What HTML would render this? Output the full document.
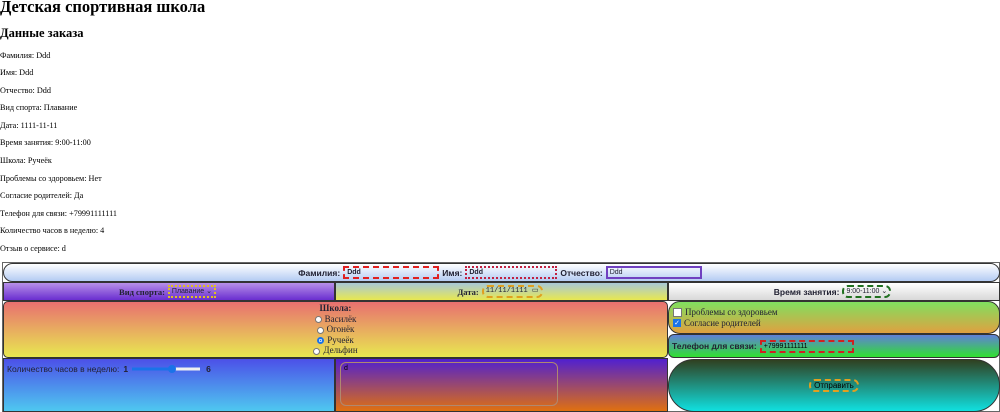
<!DOCTYPE html>
<html><head><meta charset="utf-8"><style>
body{margin:0;width:1000px;height:412px;overflow:hidden;background:#fff;font-family:"Liberation Serif",serif;color:#000;position:relative}
.a{position:absolute}
h1{position:absolute;margin:0;left:0;top:-3px;font-size:16.5px;font-weight:bold;line-height:20px}
h2{position:absolute;margin:0;left:0;top:25px;font-size:12.5px;font-weight:bold;line-height:16px}
.p{position:absolute;left:0;font-size:8.2px;white-space:nowrap}
.c{box-sizing:border-box;border:1px solid #333;font-family:"Liberation Sans",sans-serif;font-size:8.5px;color:#223;display:flex;align-items:center;justify-content:center}
.s{font-family:"Liberation Serif",serif}
.b{font-weight:bold}
.in{display:inline-block;height:9px;font-size:7px;line-height:9px;padding:0 2px;text-align:left;box-sizing:content-box;margin:0 3px}
.r{display:inline-block;width:7px;height:7px;border-radius:50%;background:#fff;border:1px solid #777;vertical-align:middle;margin-right:3px;box-sizing:border-box}
</style></head><body>
<h1>Детская спортивная школа</h1>
<h2>Данные заказа</h2>
<div class="p" style="top:51px">Фамилия: Ddd</div>
<div class="p" style="top:68px">Имя: Ddd</div>
<div class="p" style="top:86px">Отчество: Ddd</div>
<div class="p" style="top:103px">Вид спорта: Плавание</div>
<div class="p" style="top:121px">Дата: 1111-11-11</div>
<div class="p" style="top:138px">Время занятия: 9:00-11:00</div>
<div class="p" style="top:156px">Школа: Ручеёк</div>
<div class="p" style="top:174px">Проблемы со здоровьем: Нет</div>
<div class="p" style="top:191px">Согласие родителей: Да</div>
<div class="p" style="top:209px">Телефон для связи: +79991111111</div>
<div class="p" style="top:226px">Количество часов в неделю: 4</div>
<div class="p" style="top:244px">Отзыв о сервисе: d</div>

<div class="a" style="left:2px;top:262px;width:998px;height:150px;border:1px solid #666;box-sizing:border-box"></div>

<div class="a c b" style="left:3px;top:263px;width:997px;height:19px;border-radius:10px;background:linear-gradient(#fff,#b4cbf3)">
Фамилия:<span class="in" style="width:88px;border:2px dashed #e02020">Ddd</span>Имя:<span class="in" style="width:84px;border:2px dotted #c02040">Ddd</span>Отчество:<span class="in" style="width:88px;border:2px solid #7040c0;font-weight:normal">Ddd</span></div>

<div class="a c b s" style="left:3px;top:282px;width:332px;height:19px;background:linear-gradient(#b890e8,#6a2ed0)">Вид спорта: <span class="in" style="border:2px dotted #e0c020;font-family:'Liberation Sans';font-weight:normal">Плавание ⌄</span></div>
<div class="a c b s" style="left:335px;top:282px;width:333px;height:19px;background:linear-gradient(#a8c8d8,#e8e850)">Дата: <span class="in" style="border:2px dashed #e0a020;border-radius:6px;font-family:'Liberation Mono';font-weight:normal">11/11/1111 ▭</span></div>
<div class="a c b" style="left:668px;top:282px;width:332px;height:19px;background:linear-gradient(#fff,#d8d8d8)">Время занятия: <span class="in" style="border:2px dashed #207020;border-radius:6px;font-weight:normal">9:00-11:00 ⌄</span></div>

<div class="a c s" style="left:3px;top:301px;width:665px;height:57px;border-radius:5px;background:linear-gradient(#e87070,#e8e850);flex-direction:column;line-height:10.5px;font-size:9px">
<div class="b">Школа:</div><div><span class="r"></span>Василёк</div><div><span class="r"></span>Огонёк</div><div><span class="r" style="border:2px solid #1a73e8;background:radial-gradient(#1a73e8 35%,#fff 40%)"></span>Ручеёк</div><div><span class="r"></span>Дельфин</div></div>

<div class="a c s" style="left:668px;top:301px;width:332px;height:33px;border-radius:12px;background:linear-gradient(#80e060,#e0a040);flex-direction:column;align-items:flex-start;padding-left:4px;line-height:11px;font-size:9px">
<div><span style="display:inline-block;width:7px;height:7px;background:#fff;border:1px solid #777;margin-right:3px;vertical-align:middle"></span>Проблемы со здоровьем</div><div><span style="display:inline-block;width:8px;height:8px;background:#1a73e8;color:#fff;font-size:7px;line-height:8px;text-align:center;margin-right:3px;vertical-align:middle">✓</span>Согласие родителей</div></div>
<div class="a c b" style="left:668px;top:334px;width:332px;height:24px;border-radius:6px;background:linear-gradient(#6080d8,#30e030);justify-content:flex-start;padding-left:3px">Телефон для связи: <span class="in" style="width:86px;border:2px dashed #d02020;font-weight:normal;color:#000">+79991111111</span></div>

<div class="a c" style="left:3px;top:358px;width:332px;height:54px;background:linear-gradient(#4c50e8,#4ec8f0);align-items:flex-start;justify-content:flex-start;padding:5px 3px;font-size:8.5px">Количество часов в неделю: <b style="margin:0 4px">1</b><svg width="70" height="10" style="margin-top:0"><rect x="0" y="3.5" width="40" height="3" fill="#1a73e8"/><rect x="40" y="3.5" width="28" height="3" fill="#f0f0f0"/><circle cx="40" cy="5" r="4" fill="#1a73e8"/></svg><b style="margin-left:4px">6</b></div>
<div class="a c" style="left:335px;top:358px;width:333px;height:54px;background:linear-gradient(#5020d0,#e07010)"></div>
<div class="a" style="left:340px;top:362px;width:218px;height:44px;border:1.5px solid #b08870;border-radius:6px;box-sizing:border-box;font-size:7px;font-family:'Liberation Sans';padding:2px 3px">d</div>
<div class="a c" style="left:668px;top:359px;width:332px;height:53px;border-radius:26px;background:linear-gradient(#304020,#10e0e0)"><span style="border:2px dashed #e0a020;border-radius:6px;padding:0 3px;font-size:8px;color:#000">Отправить</span></div>
</body></html>
